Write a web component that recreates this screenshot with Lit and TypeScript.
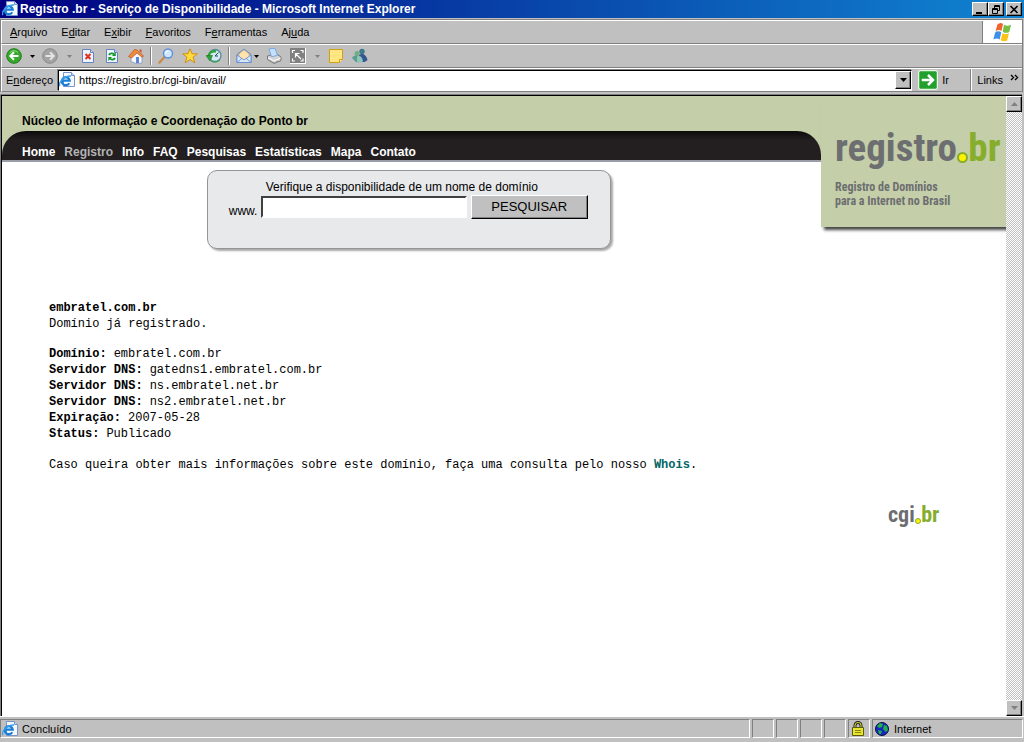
import { LitElement, html, css, svg } from "lit";
import { customElement, state } from "lit/decorators.js";

const iePage = svg`
  <path d="M4.500 .5h8l3 3v11h-11z" fill="#f4f8ff" stroke="#7a93c8"/>
  <path d="M12.500 .5v3h3" fill="#cfdcf5" stroke="#7a93c8"/>
  <path d="M10.300 11.200A4 4 0 1 1 10.800 8.600H3.500" fill="none" stroke="#1c7fd6" stroke-width="2.200"/>
  <path d="M1 14C-1.500 10.500 6 3.500 12 4" fill="none" stroke="#3aa0ea" stroke-width="1.400"/>`;

const glyphs: Record<string, unknown> = {
  ie: iePage,
  back: svg`<circle cx="8" cy="8" r="7.300" fill="#35a92b" stroke="#1f7d1c"/><path d="M4 4.500a5.500 5.500 0 0 1 8 0" stroke="#8ee07c" fill="none"/><path d="M12.500 8H4.500M8 4.300L4.300 8 8 11.700" stroke="#fff" stroke-width="2" fill="none"/>`,
  forward: svg`<circle cx="8" cy="8" r="7.300" fill="#a3a3a3" stroke="#8a8a8a"/><path d="M3.500 8h8M8 4.300L11.700 8 8 11.700" stroke="#e4e4e4" stroke-width="2" fill="none"/>`,
  stop: svg`<path d="M2.500 1.500h8l3 3v10h-11z" fill="#eef4ff" stroke="#6583c4"/><path d="M10.500 1.500v3h3" fill="#c4d5f4" stroke="#6583c4"/><path d="M5.500 6l5 5M10.500 6l-5 5" stroke="#e0301e" stroke-width="2"/>`,
  refresh: svg`<path d="M2.500 1.500h8l3 3v10h-11z" fill="#eef4ff" stroke="#6583c4"/><path d="M10.500 1.500v3h3" fill="#c4d5f4" stroke="#6583c4"/><path d="M5 7c1-2 4-2 5-.5M11 10c-1 2-4 2-5 .5" stroke="#169a28" stroke-width="1.800" fill="none"/><path d="M11.800 4v4H8zM4.300 13V9H8z" fill="#169a28"/>`,
  home: svg`<path d="M3 8l6-5 5 5v7l-6 .5-5-2z" fill="#f6f7fb" stroke="#8797c4" stroke-width=".8"/><path d="M0.500 8.500L6.500 1.500 9 2l6.500 6-1.500 1.200L9 5 3.500 10z" fill="#f08a3c" stroke="#b8521a" stroke-width=".7"/><path d="M11.500 1.500h2v3.500l-2-2z" fill="#d14b24"/><path d="M8 9h3v6H8z" fill="#5a86d8"/>`,
  search: svg`<path d="M1.500 14.500L6.500 9" stroke="#c98a4c" stroke-width="2.400" stroke-linecap="round"/><circle cx="10" cy="5.500" r="4.500" fill="#cfe8fd" stroke="#5f8fd8" stroke-width="1.400"/><path d="M7.500 5.500A2.500 2.500 0 0 1 10 3" stroke="#fff" fill="none"/>`,
  star: svg`<path d="M8 .8l2 5h5.300l-4.200 3.400 1.700 5.600L8 11.500l-4.800 3.300 1.700-5.600L.7 5.800H6z" fill="#ffdc3c" stroke="#d08e14"/>`,
  history: svg`<circle cx="9" cy="7.500" r="6" fill="#d5e9f3" stroke="#548c9c" stroke-width="1.300"/><path d="M12.500 4.500L9 8h3" stroke="#294b62" fill="none"/><path d="M2.500 8.500C3 4 7 2.500 10 3.500" stroke="#2fa43a" stroke-width="2.400" fill="none"/><path d="M0 7.500h6.500L4 13z" fill="#2fa43a" stroke="#14731f" stroke-width=".6"/><path d="M5 13c3 2 7 1 9-1" stroke="#2fa43a" fill="none"/>`,
  mail: svg`<path d="M1 6.500L8 1l7 5.500v8H1z" fill="#a9c8f2" stroke="#6288cc"/><path d="M3 6l5-4 5 4v4l-5 2-5-2z" fill="#ffe3ad" stroke="#e0a04c" stroke-width=".6"/><path d="M1 7l7 5 7-5v7.500H1z" fill="#d9e9fd" stroke="#6288cc" stroke-width=".8"/><path d="M1 14.500l5-4.300M15 14.500l-5-4.300" stroke="#6288cc" stroke-width=".8"/>`,
  print: svg`<path d="M1.500 8L10 5.500l5 3.500v3.500L8 15.500l-6.500-4z" fill="#d4d4d4" stroke="#777"/><path d="M3 .8l6-.5 2.500 7-6 1.500z" fill="#c5e0fc" stroke="#6aa0e0" stroke-width=".8"/><path d="M2 9.500l6 3.500 6.500-3" fill="none" stroke="#fff"/><path d="M4 12.500l4 2.500 4-2" stroke="#999" fill="none"/>`,
  fullscreen: svg`<path d="M0 0h16v16H0z" fill="#808080"/><path d="M0 16h16V0" stroke="#fff" stroke-width="2" fill="none"/><path d="M2.500 5V2.500H5M10.500 2.500H13V5M13 10.500V13h-2.500M5 13H2.500v-2.500M5.500 9.500v-4h4M6 6l5 5" stroke="#fff" stroke-width="1.200" fill="none"/>`,
  note: svg`<path d="M1.500 1.500h13v10l-3 3h-10z" fill="#ffe680" stroke="#d89f14"/><path d="M14.500 11.500h-3v3" fill="#fff3b8" stroke="#d89f14"/>`,
  people: svg`<circle cx="10" cy="3.500" r="2.700" fill="#3b7a8c"/><path d="M7 7c3-2 7-1 8.500 5-3 3-6 2-8 1z" fill="#34568e"/><circle cx="5" cy="5.500" r="2.500" fill="#6fae82"/><path d="M0 10c2-3 5-3 6-1l2 4c-2 2-5 1-5 0z" fill="#5a9c8d"/><path d="M5 9c2-2 5-1 6 4-2 2.500-5 2-6 0z" fill="#8fc4bd"/>`,
  globe: svg`<circle cx="8" cy="8" r="6.500" fill="#1426c4" stroke="#0a1038"/><path d="M3 5l3-3 3 1-1 3-3 1zM10 4l3 1 1 4-2 2-3-3zM4 9l4 1-1 3-2 0z" fill="#21b04a"/>`,
  lock: svg`<path d="M5 7V4.500a3 3 0 0 1 6 0V7" fill="none" stroke="#222" stroke-width="3"/><path d="M5 7V4.500a3 3 0 0 1 6 0V7" fill="none" stroke="#c8c832" stroke-width="1.200"/><path d="M2.500 6.500h11v8h-11z" fill="#e8e432" stroke="#5b5a08"/><path d="M5 9.500h6M5 11.500h6" stroke="#8a8810"/>`,
  windows: svg`<path d="M3.500 2Q6-.2 8 1.500L6.800 7.200Q4.500 5.500 2 7.500z" fill="#f2622c"/><path d="M8.800 2Q11 4 14.500 2.200L13 8Q10 9.500 7.800 7.700z" fill="#77c043"/><path d="M1.700 8.400Q4 6.500 6.600 8.200L5.300 14Q3 12.200.3 14z" fill="#3f8ee8"/><path d="M7.500 8.700Q10 10.500 12.800 9L11.300 14.800Q9 16 6.200 14.500z" fill="#fcc419"/>`,
  go: svg`<rect x=".5" y=".5" width="15" height="15" rx="1.500" fill="#22a02c" stroke="#e9f7e6"/><path d="M3 8h8.500M8 4l4 4-4 4" stroke="#fff" stroke-width="2" fill="none"/>`,
};

const icon = (name: string, size = 16) =>
  html`<svg class="icon" width=${size} height=${size} viewBox="0 0 16 16" aria-hidden="true">${glyphs[name]}</svg>`;

const caret = (dim = false) =>
  html`<svg width="5" height="3" viewBox="0 0 5 3" aria-hidden="true"><path d="M0 0h5L2.500 3z" fill=${dim ? "#808080" : "#000"} /></svg>`;

@customElement("app-root")
export class AppRoot extends LitElement {
  @state() private query = "";

  private menus = [
    ["", "A", "rquivo"],
    ["E", "d", "itar"],
    ["E", "x", "ibir"],
    ["", "F", "avoritos"],
    ["F", "e", "rramentas"],
    ["Aj", "u", "da"],
  ];

  private links = ["Home", "Registro", "Info", "FAQ", "Pesquisas", "Estatísticas", "Mapa", "Contato"];

  private record = [
    ["Domínio", "embratel.com.br"],
    ["Servidor DNS", "gatedns1.embratel.com.br"],
    ["Servidor DNS", "ns.embratel.net.br"],
    ["Servidor DNS", "ns2.embratel.net.br"],
    ["Expiração", "2007-05-28"],
    ["Status", "Publicado"],
  ];

  static styles = css`
    :host {
      display: flex;
      flex-direction: column;
      height: 100vh;
      background: #c0c0c0;
      color: #000;
      font: 11px/14px "Liberation Sans", Arial, sans-serif;
    }
    * { box-sizing: border-box; }
    svg { display: block; flex: none; }
    button { font: inherit; color: inherit; margin: 0; padding: 0; border: 0; background: none; }
    h1, p, dl, dd { margin: 0; }
    u { text-underline-offset: 1px; }

    .title {
      display: flex;
      align-items: center;
      height: 18px;
      padding: 0 2px;
      gap: 2px;
      color: #fff;
      background: linear-gradient(90deg, #000080, #1084d0);
    }
    .title h1 { flex: 1; font-size: 12px; line-height: 18px; white-space: nowrap; overflow: hidden; }
    .controls { display: flex; }
    .control, .arrow {
      display: grid;
      place-items: center;
      width: 16px;
      height: 14px;
      background: #c0c0c0;
      border: 1px solid;
      border-color: #fff #000 #000 #fff;
      box-shadow: inset -1px -1px #808080;
    }
    .close { margin-left: 2px; }

    .bars { margin-top: 1px; border: 1px solid #808080; border-bottom: 0; margin-right: 1px; }
    .bar {
      display: flex;
      align-items: center;
      height: 24px;
      border: 1px solid #fff;
      border-width: 1px 0 0 1px;
      border-bottom: 1px solid #808080;
    }
    .menu { gap: 14px; padding-left: 8px; }
    .throbber {
      display: grid;
      place-items: center;
      align-self: stretch;
      width: 40px;
      margin-left: auto;
      background: #fff;
      border-left: 1px solid #808080;
    }
    .tool { display: flex; align-items: center; justify-content: center; width: 24px; height: 22px; }
    .drop { width: 12px; }
    .drop.wide { width: 14px; }
    .combo { width: 30px; gap: 2px; }
    .sep { width: 2px; height: 18px; margin: 0 2px; border-left: 1px solid #808080; border-right: 1px solid #fff; }

    .address { padding-left: 4px; }
    .field {
      flex: 1;
      display: flex;
      align-items: center;
      height: 21px;
      margin: 0 6px 0 5px;
      gap: 4px;
      background: #fff;
      border: 1px solid;
      border-color: #000 #fff #fff #000;
      box-shadow: -1px -1px #808080;
    }
    .field input { flex: 1; min-width: 0; border: 0; padding: 0; outline: 0; background: none; font: inherit; }
    .field .arrow { height: 18px; }
    .go { display: flex; align-items: center; gap: 4px; width: 52px; }
    .links { display: flex; gap: 7px; align-items: center; height: 22px; padding: 0 3px 0 6px; border-left: 1px solid #808080; box-shadow: inset 1px 0 #fff; }

    .view {
      flex: 1;
      min-height: 0;
      display: flex;
      margin: 2px 2px 0 0;
      border: 1px solid #808080;
      border-width: 1px 0 0 1px;
      box-shadow: inset 1px 1px #000;
      padding: 1px 0 0 1px;
      background: #fff;
    }
    .page {
      flex: 1;
      min-width: 0;
      display: grid;
      grid-template-columns: 1fr 185px;
      grid-template-rows: auto 1fr;
      align-items: start;
      overflow: hidden;
    }
    main { grid-row: 1 / 3; }
    .scroll {
      display: flex;
      flex-direction: column;
      justify-content: space-between;
      width: 16px;
      background: repeating-conic-gradient(#c0c0c0 0 25%, #fff 0 50%) 0 0 / 2px 2px;
    }
    .scroll .arrow { height: 16px; }

    .masthead { background: #c4cea8; padding-top: 16px; }
    .org { padding-left: 20px; font-size: 12px; line-height: 19px; font-weight: bold; }
    .nav {
      display: flex;
      gap: 9px;
      height: 31px;
      padding: 13px 20px 0;
      border-radius: 24px 24px 0 0;
      border-bottom: 2px solid #9a9da8;
      background: linear-gradient(#0c0a0b, #231f20 9px);
      font-size: 12px;
      line-height: 16px;
      font-weight: bold;
    }
    .nav a { color: #fff; text-decoration: none; }
    .nav a.current { color: #b4b4b4; }

    .search {
      width: 404px;
      height: 79px;
      margin: 8px 0 0 25%;
      padding: 9px 22px 0 21px;
      border: 1px solid #939598;
      border-radius: 10px;
      background: #e8e9eb;
      box-shadow: 2px 2px 2px #aaa;
      font-size: 12px;
      line-height: 16px;
    }
    .search label { display: block; padding-left: 37px; line-height: 15px; }
    .row { display: flex; align-items: center; gap: 4px; }
    .prefix { align-self: flex-end; }
    .row input {
      flex: 1;
      min-width: 0;
      height: 22px;
      border: 2px solid;
      border-color: #404040 #fff #fff #404040;
      outline: 0;
      background: #fff;
    }
    .row button {
      width: 117px;
      height: 24px;
      font-size: 13px;
      background: #c0c0c0;
      border: 1px solid;
      border-color: #fff #000 #000 #fff;
      box-shadow: inset -1px -1px #808080;
    }

    .brand { height: 131px; padding: 20px 8px 0 14px; background: #c4cea8; box-shadow: 3px 3px 3px #444; color: #6d6e71; }
    .wordmark { display: flex; font-family: "Roboto Condensed", "Open Sans Condensed", "DejaVu Sans Condensed", sans-serif; font-weight: bold; white-space: nowrap; }
    .big { font-size: 39px; line-height: 64px; }
    .green { color: #86ad2b; }
    .dot { position: relative; color: #86ad2b; }
    .dot::after {
      content: "";
      position: absolute;
      right: 0;
      bottom: 17px;
      width: 7px;
      height: 7px;
      border: 2px solid #86ad2b;
      border-radius: 50%;
      background: #fff200;
      box-sizing: content-box;
    }
    .slogan { font: bold 12px/14px "Roboto Condensed", "Open Sans Condensed", "Liberation Sans", sans-serif; white-space: nowrap; }

    .result { padding: 51px 0 0 47px; font: 12px/16px "Liberation Mono", "Courier New", monospace; white-space: nowrap; }
    .record { margin: 14px 0 15px; }
    .record div { display: flex; gap: 7px; }
    dt { font-weight: bold; }
    .result a { color: #066; font-weight: bold; text-decoration: none; }
    .cgi { padding-left: 67px; margin-top: 268px; color: #6d6e71; }
    .small { font-size: 22px; line-height: 40px; }
    .small .dot::after { width: 4px; height: 4px; border-width: 1px; bottom: 11px; }

    .status { display: flex; gap: 2px; height: 26px; padding: 2px 1px 4px 0; border-top: 1px solid #fff; }
    .cell {
      display: flex;
      align-items: center;
      width: 22px;
      padding-left: 1px;
      gap: 4px;
      border: 1px solid;
      border-color: #808080 #fff #fff #808080;
    }
    .grow { flex: 1; }
    .zone { width: 151px; }
  `;

  private chrome() {
    return html`
      <header class="title">
        ${icon("ie")}
        <h1>Registro .br - Serviço de Disponibilidade - Microsoft Internet Explorer</h1>
        <div class="controls">
          <button class="control" aria-label="Minimizar"><svg width="10" height="9"><path d="M1 7h6v2H1z" /></svg></button>
          <button class="control" aria-label="Restaurar"><svg width="10" height="9" fill="none" stroke="#000"><path d="M3.500 3V.5h5v5H7M3 1.500h6M1.500 3.500h5v5h-5zM1 4.500h6" /></svg></button>
          <button class="control close" aria-label="Fechar"><svg width="10" height="9"><path d="M1.500 1l7 7M8.500 1l-7 7" stroke="#000" stroke-width="1.600" /></svg></button>
        </div>
      </header>
      <div class="bars">
        <nav class="bar menu" aria-label="Menu">
          ${this.menus.map(([a, b, c]) => html`<button>${a}<u>${b}</u>${c}</button>`)}
          <span class="throbber">${icon("windows", 20)}</span>
        </nav>
        <div class="bar" role="toolbar">
          <button class="tool" aria-label="Voltar">${icon("back")}</button>
          <button class="tool drop" aria-label="Histórico de voltar">${caret()}</button>
          <button class="tool" aria-label="Avançar">${icon("forward")}</button>
          <button class="tool drop wide" aria-label="Histórico de avançar">${caret(true)}</button>
          <button class="tool" aria-label="Parar">${icon("stop")}</button>
          <button class="tool" aria-label="Atualizar">${icon("refresh")}</button>
          <button class="tool" aria-label="Página inicial">${icon("home")}</button>
          <span class="sep"></span>
          <button class="tool" aria-label="Pesquisar">${icon("search")}</button>
          <button class="tool" aria-label="Favoritos">${icon("star")}</button>
          <button class="tool" aria-label="Histórico">${icon("history")}</button>
          <span class="sep"></span>
          <button class="tool combo" aria-label="Correio">${icon("mail")}${caret()}</button>
          <button class="tool" aria-label="Imprimir">${icon("print")}</button>
          <button class="tool" aria-label="Tela inteira">${icon("fullscreen")}</button>
          <button class="tool drop wide" aria-label="Opções de tela">${caret(true)}</button>
          <button class="tool" aria-label="Discussão">${icon("note")}</button>
          <button class="tool" aria-label="Messenger">${icon("people")}</button>
        </div>
        <div class="bar address">
          <label for="url">E<u>n</u>dereço</label>
          <div class="field">
            ${icon("ie")}
            <input id="url" type="text" value="https://registro.br/cgi-bin/avail/" />
            <button class="arrow" aria-label="Endereços anteriores"><svg width="7" height="4"><path d="M0 0h7L3.500 4z" /></svg></button>
          </div>
          <button class="go">${icon("go", 20)}<span>Ir</span></button>
          <div class="links"><span>Links</span><svg width="9" height="14" fill="none" stroke="#000" stroke-width="1.400"><path d="M1 2l2.500 2.500L1 7M5 2l2.500 2.500L5 7" /></svg></div>
        </div>
      </div>
    `;
  }

  private wordmark(text: string, size: string) {
    return html`<div class="wordmark ${size}"><span>${text}</span><span class="dot">.</span><span class="green">br</span></div>`;
  }

  render() {
    return html`
      ${this.chrome()}
      <div class="view">
        <div class="page">
          <main>
            <div class="masthead">
              <p class="org">Núcleo de Informação e Coordenação do Ponto br</p>
              <nav class="nav">
                ${this.links.map((l) => html`<a href="#" class=${l === "Registro" ? "current" : ""}>${l}</a>`)}
              </nav>
            </div>
            <form class="search" @submit=${(e: Event) => e.preventDefault()}>
              <label for="domain">Verifique a disponibilidade de um nome de domínio</label>
              <div class="row">
                <span class="prefix">www.</span>
                <input id="domain" type="text" .value=${this.query} @input=${(e: Event) => (this.query = (e.target as HTMLInputElement).value)} />
                <button type="submit">PESQUISAR</button>
              </div>
            </form>
            <section class="result">
              <p><b>embratel.com.br</b></p>
              <p>Domínio já registrado.</p>
              <dl class="record">
                ${this.record.map(([k, v]) => html`<div><dt>${k}:</dt><dd>${v}</dd></div>`)}
              </dl>
              <p>Caso queira obter mais informações sobre este domínio, faça uma consulta pelo nosso <a href="#">Whois</a>.</p>
            </section>
          </main>
          <aside class="brand">
            ${this.wordmark("registro", "big")}
            <p class="slogan">Registro de Domínios<br />para a Internet no Brasil</p>
          </aside>
          <div class="cgi">${this.wordmark("cgi", "small")}</div>
        </div>
        <div class="scroll">
          <button class="arrow" aria-label="Rolar para cima"><svg width="7" height="4"><path d="M0 4h7L3.500 0z" fill="#808080" /></svg></button>
          <button class="arrow" aria-label="Rolar para baixo"><svg width="7" height="4"><path d="M0 0h7L3.500 4z" fill="#808080" /></svg></button>
        </div>
      </div>
      <footer class="status">
        <div class="cell grow">${icon("ie")}<span>Concluído</span></div>
        <div class="cell"></div>
        <div class="cell"></div>
        <div class="cell"></div>
        <div class="cell"></div>
        <div class="cell">${icon("lock")}</div>
        <div class="cell zone">${icon("globe")}<span>Internet</span></div>
      </footer>
    `;
  }
}
